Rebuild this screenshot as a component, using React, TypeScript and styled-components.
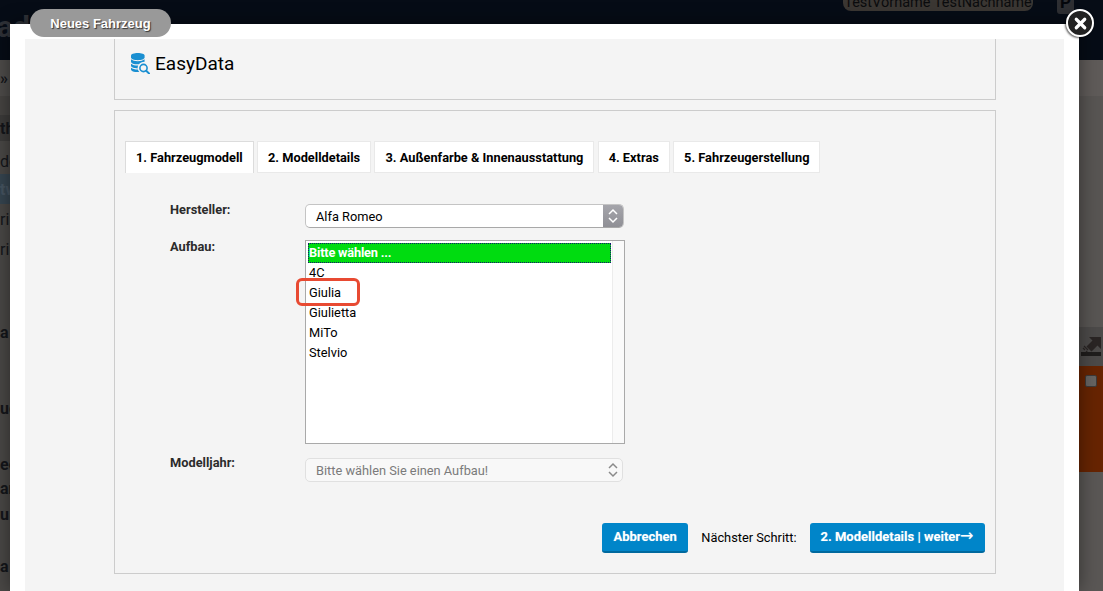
import { ReactNode } from 'react'
import styled, { createGlobalStyle } from 'styled-components'
import { X } from 'lucide-react'

const GlobalStyle = createGlobalStyle`
  html, body {
    margin: 0;
    padding: 0;
    overflow: hidden;
  }
  body {
    font-family: Roboto, "Liberation Sans", sans-serif;
    font-size: 12.8px;
    color: #000;
  }
`

const tabs = [
  '1. Fahrzeugmodell',
  '2. Modelldetails',
  '3. Außenfarbe & Innenausstattung',
  '4. Extras',
  '5. Fahrzeugerstellung',
]

const options = ['4C', 'Giulia', 'Giulietta', 'MiTo', 'Stelvio']

const leftLines: { h: number; text?: string; tone?: string; pad?: number }[] = [
  { h: 36, text: '»', tone: 'sub' },
  { h: 19, tone: 'subdark' },
  { h: 26, text: 'th', tone: 'band' },
  { h: 33, text: 'de', pad: 8 },
  { h: 30, text: 'tw', tone: 'blue' },
  { h: 31, text: 'ri' },
  { h: 29, text: 'ri' },
  { h: 136, text: 'a' },
  { h: 16, text: 'ud' },
  { h: 37 },
  { h: 22, text: 'ec' },
  { h: 26, text: 'an' },
  { h: 26, text: 'u' },
  { h: 78, text: 'a' },
]

const Chevrons = ({ color }: { color: string }) => (
  <svg width="12" height="18" viewBox="0 0 12 18" fill="none" stroke={color} strokeWidth="1.5">
    <path d="M2 7 L6 3 L10 7" />
    <path d="M2 11 L6 15 L10 11" />
  </svg>
)

const DatabaseIcon = () => (
  <svg width="19" height="21" viewBox="0 0 19 21">
    <g fill="#1a8fd1">
      <path d="M0 2.6C0 1 3 0 6.8 0s6.8 1 6.8 2.6v2C13.6 6.2 10.600 7.200 6.800 7.200S0 6.200 0 4.600z" />
      <path d="M0 6.300c1.500 1.200 4 1.900 6.800 1.900s5.300-.7 6.800-1.900v2.400c-2.600 .2-4.600 1.100-5.600 2.500-.4 0-.8 .1-1.200 .1C3 11.300 0 10.300 0 8.700z" />
      <path d="M0 10.700c1.500 1.200 4 1.900 6.800 1.900h.4c-.4 .9-.6 1.700-.6 2.600v.2C3 15.300 0 14.400 0 12.800z" />
      <path d="M0 14.800c1.500 1.100 3.800 1.700 6.800 1.800.3 .9 .8 1.700 1.500 2.400-.5 .1-1 .1-1.500 .1C3 19.100 0 18.100 0 16.500z" />
    </g>
    <circle cx="12.500" cy="15" r="3.600" fill="none" stroke="#1a8fd1" strokeWidth="1.600" />
    <path d="M15.200 17.700 L18 20.400" stroke="#1a8fd1" strokeWidth="2" strokeLinecap="round" />
  </svg>
)

const DockIcon = () => (
  <svg width="20" height="20" viewBox="0 0 20 20">
    <path d="M7 1 H19 V13 L15.500 9.500 L9.500 15.500 L4.500 10.500 L10.500 4.500 Z" fill="#2a2524" />
    <path d="M1 12 L3 14 M2 10 L6 14 M4 15 L6 17" stroke="#2a2524" strokeWidth="1.200" />
  </svg>
)

type FieldProps = { label: string; children: ReactNode; labelShift?: number }

const Field = ({ label, children, labelShift = 0 }: FieldProps) => (
  <>
    <FieldLabel $shift={labelShift}>{label}</FieldLabel>
    {children}
  </>
)

export default function App() {
  return (
    <Root>
      <GlobalStyle />

      <Backdrop>
        <TopBar>
          <BrandText>ad</BrandText>
          <UserPill>TestVorname TestNachname</UserPill>
          <ParkBadge>P</ParkBadge>
        </TopBar>
        <BackdropBody>
          <LeftStrip>
            {leftLines.map((line, i) => (
              <StripLine key={i} $h={line.h} $tone={line.tone} $pad={line.pad}>
                {line.text}
              </StripLine>
            ))}
          </LeftStrip>
          <RightStrip>
            <RightBlock $h={36} $color="#5f5b59" />
            <RightBlock $h={231} $color="#585553" />
            <DockRow>
              <DockIcon />
              <DockBar />
            </DockRow>
            <OrangeRow>
              <GhostCheckbox />
            </OrangeRow>
            <RightBlock $h={119} $color="#5a5755" />
          </RightStrip>
        </BackdropBody>
      </Backdrop>

      <Modal>
        <ModalInner>
          <BrandPanel>
            <DatabaseIcon />
            <BrandTitle>EasyData</BrandTitle>
          </BrandPanel>

          <WizardPanel>
            <TabList>
              {tabs.map((tab, i) => (
                <Tab key={tab} $active={i === 0}>
                  {tab}
                </Tab>
              ))}
            </TabList>

            <FormGrid>
              <Field label="Hersteller:">
                <ActiveSelect>
                  <SelectValue>Alfa Romeo</SelectValue>
                  <Stepper>
                    <Chevrons color="#fff" />
                  </Stepper>
                </ActiveSelect>
              </Field>

              <Field label="Aufbau:" labelShift={1}>
                <ListBox>
                  <ListItems>
                    <SelectedOption>Bitte wählen ...</SelectedOption>
                    {options.map((option) => (
                      <ListOption key={option}>{option}</ListOption>
                    ))}
                    <Marker />
                  </ListItems>
                  <ListScrollbar />
                </ListBox>
              </Field>

              <Field label="Modelljahr:" labelShift={1}>
                <DisabledSelect>
                  <SelectValue>Bitte wählen Sie einen Aufbau!</SelectValue>
                  <DisabledArrows>
                    <Chevrons color="#8a8a8a" />
                  </DisabledArrows>
                </DisabledSelect>
              </Field>
            </FormGrid>

            <ActionRow>
              <CancelButton>Abbrechen</CancelButton>
              <NextLabel>Nächster Schritt:</NextLabel>
              <PrimaryButton>
                2. Modelldetails | weiter<ArrowGlyph>→</ArrowGlyph>
              </PrimaryButton>
            </ActionRow>
          </WizardPanel>
        </ModalInner>
      </Modal>

      <TitlePill>Neues Fahrzeug</TitlePill>
      <CloseButton>
        <X size={17} strokeWidth={4.5} color="#fff" />
      </CloseButton>
    </Root>
  )
}

const Root = styled.div`
  position: relative;
  width: 1103px;
  height: 591px;
  overflow: hidden;
  background: #4a4846;
`

const Backdrop = styled.div`
  display: flex;
  flex-direction: column;
  height: 100%;
`

const TopBar = styled.div`
  display: flex;
  align-items: flex-start;
  height: 60px;
  flex: none;
  background: #060c16;
`

const BrandText = styled.div`
  width: 30px;
  font-size: 30px;
  font-weight: 700;
  line-height: 34px;
  margin: 10px 0 0 -3px;
  color: #2f3238;
`

const UserPill = styled.div`
  width: 190px;
  height: 22px;
  margin: -11px 0 0 816px;
  border-radius: 8px;
  background: #3b3733;
  color: #0b0c0e;
  font-size: 14.500px;
  line-height: 28px;
  text-align: center;
  white-space: nowrap;
`

const ParkBadge = styled.div`
  width: 17px;
  height: 24px;
  margin: -10px 0 0 24px;
  border-radius: 3px;
  background: #2e2f33;
  color: #05070c;
  font-size: 17px;
  font-weight: 700;
  line-height: 24px;
  text-align: center;
`

const BackdropBody = styled.div`
  flex: 1;
  display: flex;
  justify-content: space-between;
`

const LeftStrip = styled.div`
  width: 10px;
  overflow: hidden;
  display: flex;
  flex-direction: column;
`

const toneColors: Record<string, string> = {
  sub: '#4e4c4a',
  subdark: '#464442',
  band: '#3c3b3a',
  blue: '#364550',
}

const StripLine = styled.div<{ $h: number; $tone?: string; $pad?: number }>`
  height: ${(p) => p.$h}px;
  flex: none;
  box-sizing: border-box;
  padding-top: ${(p) => p.$pad ?? 0}px;
  display: flex;
  align-items: center;
  white-space: nowrap;
  background: ${(p) => (p.$tone ? toneColors[p.$tone] : '#4a4846')};
  color: ${(p) => (p.$tone === 'blue' ? '#465460' : '#14161a')};
  font-size: 16px;
  font-weight: ${(p) => (p.$h === 31 || p.$h === 29 || p.$pad ? 400 : 700)};
`

const RightStrip = styled.div`
  width: 24px;
  display: flex;
  flex-direction: column;
`

const RightBlock = styled.div<{ $h: number; $color: string }>`
  height: ${(p) => p.$h}px;
  flex: none;
  background: ${(p) => p.$color};
`

const DockRow = styled.div`
  height: 39px;
  flex: none;
  background: #4c4a49;
  box-sizing: border-box;
  padding-top: 9px;
  display: flex;
  flex-direction: column;
  align-items: center;
  svg {
    margin-left: 2px;
  }
`

const DockBar = styled.div`
  width: 20px;
  height: 4px;
  margin-top: -4px;
  background: #1f1d1c;
`

const OrangeRow = styled.div`
  height: 106px;
  flex: none;
  box-sizing: border-box;
  padding: 9px 0 0 6px;
  background: #672402;
`

const GhostCheckbox = styled.div`
  width: 10px;
  height: 10px;
  border: 1px solid #3d3a39;
  border-radius: 2px;
  background: #666462;
`

const Modal = styled.div`
  position: absolute;
  left: 10px;
  top: 24px;
  width: 1069px;
  height: 567px;
  box-sizing: border-box;
  padding: 15px 15px 0;
  background: #fff;
  box-shadow: 0 0 18px rgba(0, 0, 0, 0.45);
`

const ModalInner = styled.div`
  height: 100%;
  box-sizing: border-box;
  padding: 0 68px 0 89px;
  background: #f4f4f4;
  display: flex;
  flex-direction: column;
  gap: 10px;
`

const BrandPanel = styled.div`
  height: 61px;
  flex: none;
  box-sizing: border-box;
  padding: 14px 0 0 16px;
  border: 1px solid #ccc;
  border-top: none;
  display: flex;
  align-items: flex-start;
  gap: 5px;
`

const BrandTitle = styled.div`
  font-size: 19px;
  line-height: 21px;
  color: #000;
`

const WizardPanel = styled.div`
  height: 464px;
  flex: none;
  box-sizing: border-box;
  padding: 30px 10px 0;
  border: 1px solid #ccc;
  display: flex;
  flex-direction: column;
`

const TabList = styled.div`
  display: flex;
  gap: 3.250px;
`

const Tab = styled.div<{ $active: boolean }>`
  height: 32px;
  box-sizing: border-box;
  padding: 0 10px;
  background: #fff;
  border: 1px solid ${(p) => (p.$active ? '#dcdcdc' : '#e9e9e9')};
  border-bottom: ${(p) => (p.$active ? 'none' : '1px solid #e9e9e9')};
  font-weight: 700;
  line-height: 31px;
  white-space: nowrap;
`

const FormGrid = styled.div`
  display: grid;
  grid-template-columns: 135px 320px;
  grid-template-rows: 24px 204px 24px;
  row-gap: 12px;
  margin: 31px 0 0 45px;
`

const FieldLabel = styled.div<{ $shift: number }>`
  margin-top: ${(p) => p.$shift}px;
  font-weight: 700;
  line-height: 12px;
  color: #2b2b2b;
`

const ActiveSelect = styled.div`
  width: 319px;
  height: 24px;
  box-sizing: border-box;
  border: 1px solid #c4c4c4;
  border-bottom-color: #a8a8a8;
  border-radius: 5px;
  background: #fff;
  display: flex;
  align-items: center;
  justify-content: space-between;
  overflow: hidden;
`

const SelectValue = styled.span`
  padding-left: 10px;
`

const Stepper = styled.div`
  width: 20px;
  height: 100%;
  display: flex;
  align-items: center;
  justify-content: center;
  background: linear-gradient(#a5a5ab, #8f8f95);
`

const DisabledSelect = styled.div`
  width: 318px;
  height: 24px;
  box-sizing: border-box;
  border: 1px solid #e0e0e0;
  border-radius: 5px;
  background: #f8f8f8;
  color: #7b7b7b;
  display: flex;
  align-items: center;
  justify-content: space-between;
  margin-top: 2px;
`

const DisabledArrows = styled.div`
  display: flex;
  padding-right: 3px;
`

const ListBox = styled.div`
  width: 320px;
  height: 204px;
  box-sizing: border-box;
  border: 1px solid #a9a9a9;
  background: #fff;
  display: flex;
`

const ListItems = styled.div`
  position: relative;
  flex: 1;
  box-sizing: border-box;
  padding: 2px 1px 0 2px;
`

const ListScrollbar = styled.div`
  width: 11px;
  background: #fafafa;
  border-left: 1px solid #ececec;
`

const SelectedOption = styled.div`
  height: 20px;
  box-sizing: border-box;
  border: 1px dotted #14146e;
  background: #00dc10;
  color: #fff;
  font-weight: 700;
  letter-spacing: -0.2px;
  line-height: 18px;
`

const ListOption = styled.div`
  height: 20px;
  margin-left: 1px;
  line-height: 20px;
`

const Marker = styled.div`
  position: absolute;
  left: -10px;
  top: 37px;
  width: 64px;
  height: 28px;
  box-sizing: border-box;
  border: 3px solid #e84a32;
  border-radius: 6px;
`

const ActionRow = styled.div`
  display: flex;
  align-items: center;
  justify-content: flex-end;
  margin: 43px 0 0;
`

const PrimaryButton = styled.div`
  height: 30px;
  box-sizing: border-box;
  padding: 0 11px;
  background: #0085c9;
  border-bottom: 2px solid #00699e;
  border-radius: 3px;
  color: #fff;
  font-weight: 700;
  font-size: 13px;
  line-height: 28px;
  text-shadow: 0 0 1px rgba(255, 255, 255, 0.4);
  white-space: nowrap;
`

const CancelButton = styled(PrimaryButton)`
  padding: 0 11.500px;
`

const ArrowGlyph = styled.span`
  font-family: "DejaVu Sans", sans-serif;
  font-size: 16px;
  font-weight: 400;
  line-height: 0;
  margin-right: 0.500px;
`

const NextLabel = styled.div`
  margin: -2px 13px 0;
`

const TitlePill = styled.div`
  position: absolute;
  left: 30px;
  top: 9px;
  width: 141px;
  height: 28px;
  border-radius: 14px;
  background: #999;
  color: #fff;
  font-family: "Liberation Sans", Arial, sans-serif;
  font-weight: 700;
  font-size: 13px;
  line-height: 29px;
  text-align: center;
  text-shadow: 1px 1px 1px #333;
`

const CloseButton = styled.div`
  position: absolute;
  left: 1066px;
  top: 9px;
  width: 28px;
  height: 28px;
  box-sizing: border-box;
  border: 2px solid #fff;
  border-radius: 50%;
  background: #222;
  box-shadow: -1px 1px 2px rgba(0, 0, 0, 0.6);
  display: flex;
  align-items: center;
  justify-content: center;
`
